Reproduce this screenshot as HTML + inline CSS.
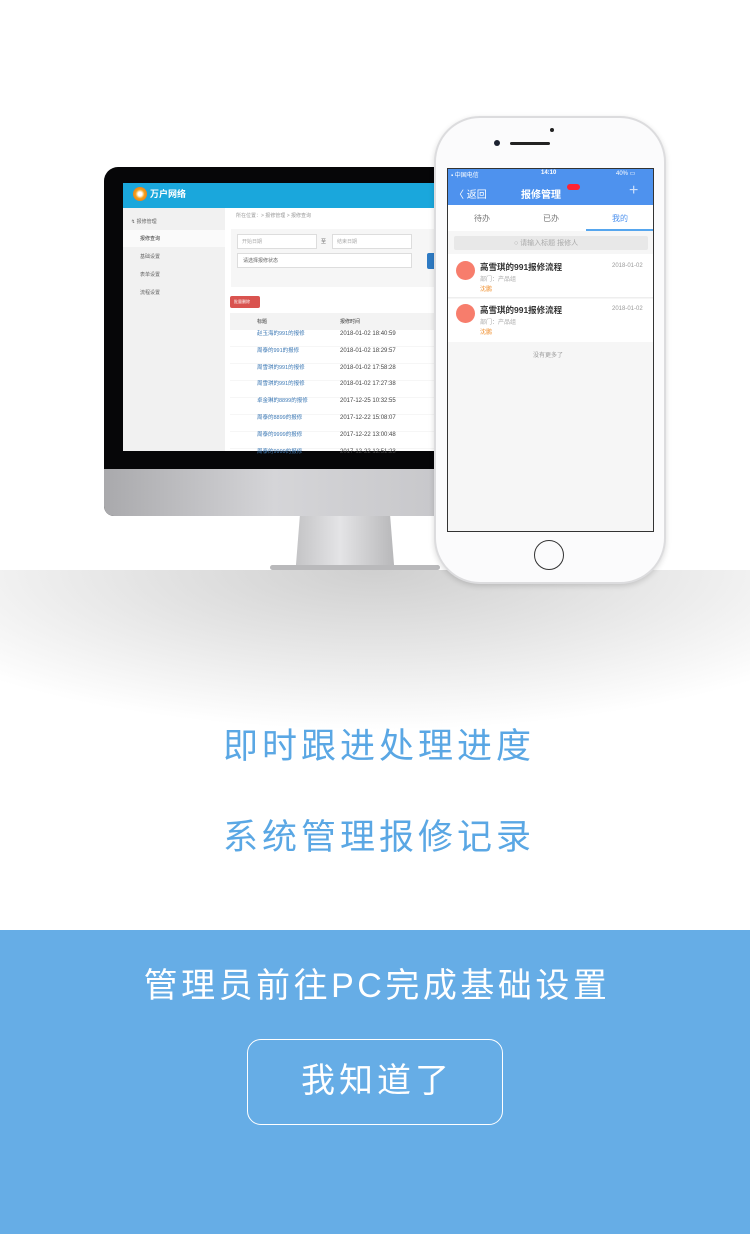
<!DOCTYPE html><html><head><meta charset="utf-8"><style>
*{margin:0;padding:0;box-sizing:border-box}
body{width:750px;height:1234px;position:relative;background:#fff;font-family:"Liberation Sans","Noto Sans CJK SC",sans-serif;overflow:hidden}
.a{position:absolute}
.t{font-size:5px;color:#666;white-space:nowrap}
</style></head><body>
<div class="a" style="left:0;top:570px;width:750px;height:160px;background:radial-gradient(ellipse 70% 100% at 50% 0%,#cfcfcf 0%,#e4e4e4 45%,#fff 100%)"></div>
<div class="a" style="left:296px;top:515px;width:98px;height:55px;background:linear-gradient(90deg,#c4c4c6,#e4e4e6 45%,#b8b8ba);clip-path:polygon(4% 0,96% 0,100% 90%,100% 100%,0 100%,0 90%)"></div>
<div class="a" style="left:270px;top:565px;width:170px;height:5px;background:#b9b9bb;border-radius:3px"></div>
<div class="a" style="left:104px;top:167px;width:340px;height:349px;background:#060608;border-radius:14px 0 0 10px;overflow:hidden">
 <div class="a" style="left:0;top:302px;width:340px;height:47px;background:linear-gradient(90deg,#a9a9ac,#d5d5d8 50%,#c7c7ca)"></div>
 <div class="a" style="left:19px;top:16px;width:321px;height:268px;background:#fff;overflow:hidden">
  <div class="a" style="left:0;top:0;width:321px;height:25px;background:#1aa7dc"></div>
  <div class="a" style="left:10px;top:4px;width:14px;height:14px;border-radius:50%;background:radial-gradient(#fff 20%,#f6a21a 45%,#e5621b)"></div>
  <div class="a" style="left:27px;top:4px;font-size:9px;color:#fff;font-weight:bold">万户网络</div>
  <div class="a" style="left:0;top:25px;width:102px;height:243px;background:#f1f1f1"></div>
  <div class="a t" style="left:8px;top:35px">↯ 报修管理</div>
  <div class="a" style="left:0;top:47px;width:102px;height:17px;background:#fafafa"></div>
  <div class="a t" style="left:17px;top:52px;color:#333">报修查询</div>
  <div class="a t" style="left:17px;top:70px">基础设置</div>
  <div class="a t" style="left:17px;top:88px">表单设置</div>
  <div class="a t" style="left:17px;top:106px">流程设置</div>
  <div class="a t" style="left:113px;top:29px;color:#999">所在位置：&gt; 报修管理 &gt; 报修查询</div>
  <div class="a" style="left:108px;top:46px;width:213px;height:58px;background:#f6f6f6"></div>
  <div class="a" style="left:114px;top:51px;width:80px;height:15px;background:#fff;border:1px solid #ddd"></div>
  <div class="a" style="left:209px;top:51px;width:80px;height:15px;background:#fff;border:1px solid #ddd"></div>
  <div class="a" style="left:114px;top:70px;width:175px;height:15px;background:#fff;border:1px solid #ddd"></div>
  <div class="a t" style="left:119px;top:55px;color:#aaa">开始日期</div>
  <div class="a t" style="left:214px;top:55px;color:#aaa">结束日期</div>
  <div class="a t" style="left:198px;top:55px">至</div>
  <div class="a t" style="left:120px;top:74px">请选择报修状态</div>
  <div class="a" style="left:304px;top:70px;width:10px;height:16px;background:#2e7bc4;border-radius:2px"></div>
  <div class="a" style="left:107px;top:113px;width:30px;height:12px;background:#d9534f;border-radius:2px"></div>
  <div class="a t" style="left:111px;top:116px;color:#fff;font-size:4px">批量删除</div>
  <div class="a" style="left:107px;top:130px;width:214px;height:17px;background:#f3f3f3"></div>
  <div class="a t" style="left:134px;top:135px;color:#333">标题</div>
  <div class="a t" style="left:217px;top:135px;color:#333">报修时间</div>
  <div class="a" style="left:107px;top:147px;width:214px;height:121px;background:repeating-linear-gradient(#fff 0,#fff 16.5px,#eee 16.5px,#eee 17px)"></div>
 </div>
</div>
<div class="a" style="left:257px;top:326px;font-size:5.5px;line-height:16.8px;color:#3d79b5;white-space:pre">赵玉海的991的报修
周泰的991的报修
周雪琪的991的报修
周雪琪的991的报修
卓金琳的8899的报修
周泰的8899的报修
周泰的9999的报修
周泰的9999的报修</div>
<div class="a" style="left:340px;top:326px;font-size:6px;line-height:16.8px;color:#444;white-space:pre">2018-01-02 18:40:59
2018-01-02 18:29:57
2018-01-02 17:58:28
2018-01-02 17:27:38
2017-12-25 10:32:55
2017-12-22 15:08:07
2017-12-22 13:00:48
2017-12-22 12:51:23</div>
<div class="a" style="left:434px;top:116px;width:232px;height:468px;background:#fbfbfc;border:2px solid #dcdcde;border-radius:46px;box-shadow:0 2px 6px rgba(0,0,0,.15)"></div>
<div class="a" style="left:550px;top:128px;width:4px;height:4px;border-radius:50%;background:#222"></div>
<div class="a" style="left:510px;top:142px;width:40px;height:3px;border-radius:2px;background:#222"></div>
<div class="a" style="left:494px;top:140px;width:6px;height:6px;border-radius:50%;background:#1c2230"></div>
<div class="a" style="left:534px;top:540px;width:30px;height:30px;border-radius:50%;border:1.5px solid #333"></div>
<div class="a" style="left:447px;top:168px;width:207px;height:364px;background:#f6f6f6;border:1px solid #333;overflow:hidden">
 <div class="a" style="left:0;top:0;width:207px;height:36px;background:#4e92ee"></div>
 <div class="a" style="left:3px;top:1px;font-size:6px;color:#fff">▪ 中国电信</div>
 <div class="a" style="left:93px;top:1px;font-size:6px;color:#fff;font-weight:bold">14:10</div>
 <div class="a" style="left:168px;top:1px;font-size:6px;color:#fff">40% ▭</div>
 <div class="a" style="left:6px;top:17px;font-size:10px;color:#fff">〈 返回</div>
 <div class="a" style="left:73px;top:17px;font-size:10px;color:#fff;font-weight:bold">报修管理</div>
 <div class="a" style="left:119px;top:15px;width:13px;height:6px;background:#f23;border-radius:3px"></div>
 <div class="a" style="left:181px;top:14px;font-size:16px;color:#cfe0fb;line-height:16px">+</div>
 <div class="a" style="left:0;top:36px;width:207px;height:26px;background:#fff"></div>
 <div class="a" style="left:26px;top:44px;font-size:8px;color:#777">待办</div>
 <div class="a" style="left:95px;top:44px;font-size:8px;color:#777">已办</div>
 <div class="a" style="left:164px;top:44px;font-size:8px;color:#4e92ee">我的</div>
 <div class="a" style="left:138px;top:60px;width:69px;height:2px;background:#56a6ee"></div>
 <div class="a" style="left:6px;top:67px;width:194px;height:14px;background:#e8e8e8;border-radius:2px"></div>
 <div class="a" style="left:66px;top:69px;font-size:7px;color:#aaa">○ 请输入标题 报修人</div>
 <div class="a" style="left:0;top:85px;width:207px;height:44px;background:#fff;border-bottom:1px solid #eee"></div>
 <div class="a" style="left:0;top:130px;width:207px;height:43px;background:#fff"></div>
 <div class="a" style="left:8px;top:92px;width:19px;height:19px;border-radius:50%;background:#f77d6c"></div>
 <div class="a" style="left:8px;top:135px;width:19px;height:19px;border-radius:50%;background:#f77d6c"></div>
 <div class="a" style="left:32px;top:92px;font-size:8.5px;color:#333;font-weight:bold">高雪琪的991报修流程</div>
 <div class="a" style="left:32px;top:135px;font-size:8.5px;color:#333;font-weight:bold">高雪琪的991报修流程</div>
 <div class="a" style="left:32px;top:105px;font-size:6px;color:#aaa">部门：产品组</div>
 <div class="a" style="left:32px;top:148px;font-size:6px;color:#aaa">部门：产品组</div>
 <div class="a" style="left:32px;top:115px;font-size:6px;color:#f09030">沈鹏</div>
 <div class="a" style="left:32px;top:158px;font-size:6px;color:#f09030">沈鹏</div>
 <div class="a" style="left:164px;top:94px;font-size:6px;color:#999">2018-01-02</div>
 <div class="a" style="left:164px;top:137px;font-size:6px;color:#999">2018-01-02</div>
 <div class="a" style="left:85px;top:181px;font-size:6px;color:#999">没有更多了</div>
</div>
<div class="a" style="left:4px;top:725px;width:750px;text-align:center;font-size:35px;letter-spacing:4px;color:#5aa7e4;line-height:44px">即时跟进处理进度</div>
<div class="a" style="left:4px;top:816px;width:750px;text-align:center;font-size:35px;letter-spacing:4px;color:#5aa7e4;line-height:44px">系统管理报修记录</div>
<div class="a" style="left:0;top:930px;width:750px;height:304px;background:#66ade6"></div>
<div class="a" style="left:2px;top:964px;width:750px;text-align:center;font-size:34px;letter-spacing:3.5px;color:#fff;line-height:44px">管理员前往PC完成基础设置</div>
<div class="a" style="left:247px;top:1039px;width:256px;height:86px;border:1.5px solid #fff;border-radius:14px;text-align:center;line-height:83px;font-size:34px;letter-spacing:4px;padding-left:4px;color:#fff">我知道了</div>
</body></html>
